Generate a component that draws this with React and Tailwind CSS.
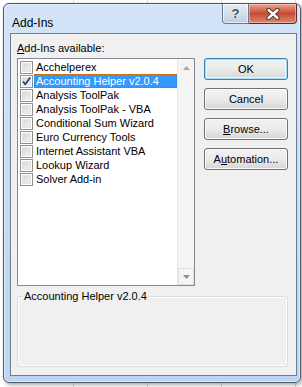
import React from 'react'

const items = [
    { name: 'Acchelperex', checked: false },
    { name: 'Accounting Helper v2.0.4', checked: true, selected: true },
    { name: 'Analysis ToolPak', checked: false },
    { name: 'Analysis ToolPak - VBA', checked: false },
    { name: 'Conditional Sum Wizard', checked: false },
    { name: 'Euro Currency Tools', checked: false },
    { name: 'Internet Assistant VBA', checked: false },
    { name: 'Lookup Wizard', checked: false },
    { name: 'Solver Add-in', checked: false },
]

const CheckBox = ({ checked }) => (
    <div className="w-[13px] h-[13px] shrink-0 border border-[#8e8f8f] bg-linear-to-br from-[#cfd2d6] to-[#f7f7f7] shadow-[inset_0_0_0_1px_#ffffff,inset_0_0_0_2px_#e2e3e5] flex items-center justify-center">
        {checked && (
            <svg width="11" height="11" viewBox="0 0 11 11">
                <path d="M2 5.5 L4.3 8.3 L9.2 1.6" fill="none" stroke="#203d7a" strokeWidth="1.7" strokeLinejoin="round" />
            </svg>
        )}
    </div>
)

const DialogButton = ({ children, isDefault }) => (
    <button
        className={`h-[22px] w-[84px] rounded-[3px] border text-[11px] leading-none text-black bg-linear-to-b from-[#f2f2f2] via-[#ebebeb] to-[#d6d6d6] ${isDefault
            ? 'border-[#3c7fb1] shadow-[inset_0_0_0_1px_#a7dcf8,inset_0_0_0_2px_#eaf6fd]'
            : 'border-[#707070] shadow-[inset_0_0_0_1px_#fbfbfb]'
            }`}
    >
        {children}
    </button>
)

export default function App() {
    return (
        <div
            className="w-[302px] h-[387px] overflow-hidden bg-white bg-[repeating-linear-gradient(90deg,transparent_0_73px,#dadcdd_73px_74px)] pt-[3px] pl-[3px]"
            style={{ fontFamily: '"Liberation Sans", Arial, sans-serif' }}
        >
            {/* Window */}
            <div className="w-[298px] h-[380px] rounded-[6px] border border-[#4b5866] bg-linear-to-b from-[#d3e4f7] via-[#c4dbf3] to-[#b9d5f2] shadow-[inset_0_0_0_1px_#e3eefb,2px_2px_4px_rgba(0,0,0,0.35)] flex flex-col">
                {/* Title bar */}
                <div className="h-[29px] flex items-start justify-between">
                    <div className="pl-[8px] pt-[11px] text-[12px] leading-[16px] text-black">Add-Ins</div>
                    <div className="flex mr-[3px]">
                        <div className="w-[27px] h-[20px] rounded-bl-[4px] border border-t-0 border-[#6c7a8a] bg-linear-to-b from-[#e5edf6] via-[#d3dfec] to-[#bfcfe0] shadow-[inset_0_0_0_1px_rgba(255,255,255,0.6)] flex items-center justify-center">
                            <span className="text-[13px] font-bold leading-none text-[#3b4654] [text-shadow:0_0_1px_#fff,0_0_2px_#fff]">?</span>
                        </div>
                        <div className="w-[48px] h-[20px] rounded-br-[4px] border border-t-0 border-l-0 border-[#5b2a22] bg-linear-to-b from-[#e8a493] via-[#c84a33] to-[#d98a6f] shadow-[inset_0_0_0_1px_rgba(255,220,210,0.5)] flex items-center justify-center">
                            <svg width="16" height="12" viewBox="0 0 16 12">
                                <path d="M3.5 2 L12.5 10 M12.5 2 L3.5 10" stroke="#3b2a28" strokeWidth="4.2" strokeLinecap="round" />
                                <path d="M3.5 2 L12.5 10 M12.5 2 L3.5 10" stroke="#ffffff" strokeWidth="2.4" strokeLinecap="round" />
                            </svg>
                        </div>
                    </div>
                </div>

                {/* Client area */}
                <div className="flex-1 ml-[6px] mr-[3px] mb-[6px] border border-[#6e7c8c] bg-[#f0f0f0] flex flex-col px-[6px] pt-[8px] text-[11px] leading-[13px] text-black">
                    <div className="flex gap-[9px]">
                        {/* List column */}
                        <div className="flex flex-col gap-[3px]">
                            <div>
                                <span className="underline underline-offset-[1px]">A</span>dd-Ins available:
                            </div>
                            <div className="w-[178px] h-[228px] border border-[#828790] bg-white flex">
                                <div className="flex-1 pt-[1px] flex flex-col">
                                    {items.map((item) => (
                                        <div key={item.name} className="h-[14px] flex items-center pl-[2px]">
                                            <CheckBox checked={item.checked} />
                                            <div
                                                className={`ml-[1px] h-[14px] flex-1 flex items-center pl-[2px] ${item.selected
                                                    ? 'bg-[#3399ff] text-white outline-1 outline-dotted outline-[#cc6600] -outline-offset-1'
                                                    : ''
                                                    }`}
                                            >
                                                {item.name}
                                            </div>
                                        </div>
                                    ))}
                                </div>
                                {/* Disabled scrollbar */}
                                <div className="w-[17px] bg-[#f4f4f4] border-l border-[#e8e8e8] flex flex-col justify-between">
                                    <div className="h-[17px] flex items-center justify-center">
                                        <svg width="7" height="4" viewBox="0 0 7 4">
                                            <path d="M0 4 L3.5 0 L7 4 Z" fill="#a6a6a6" />
                                        </svg>
                                    </div>
                                    <div className="h-[17px] border border-[#e2e2e2] flex items-center justify-center">
                                        <svg width="7" height="4" viewBox="0 0 7 4">
                                            <path d="M0 0 L7 0 L3.5 4 Z" fill="#8f8f8f" />
                                        </svg>
                                    </div>
                                </div>
                            </div>
                        </div>

                        {/* Buttons */}
                        <div className="pt-[16px] flex flex-col gap-[8px]">
                            <DialogButton isDefault>OK</DialogButton>
                            <DialogButton>Cancel</DialogButton>
                            <DialogButton>
                                <span className="underline underline-offset-[1px]">B</span>rowse...
                            </DialogButton>
                            <DialogButton>
                                A<span className="underline underline-offset-[1px]">u</span>tomation...
                            </DialogButton>
                        </div>
                    </div>

                    {/* Description group */}
                    <div className="relative mt-[10px] w-[271px] h-[71px] rounded-[3px] border border-[#d5dfe5] shadow-[inset_0_0_0_1px_#ffffff]">
                        <div className="absolute -top-[7px] left-[5px] bg-[#f0f0f0] px-[1px]">Accounting Helper v2.0.4</div>
                    </div>
                </div>
            </div>
        </div>
    )
}
